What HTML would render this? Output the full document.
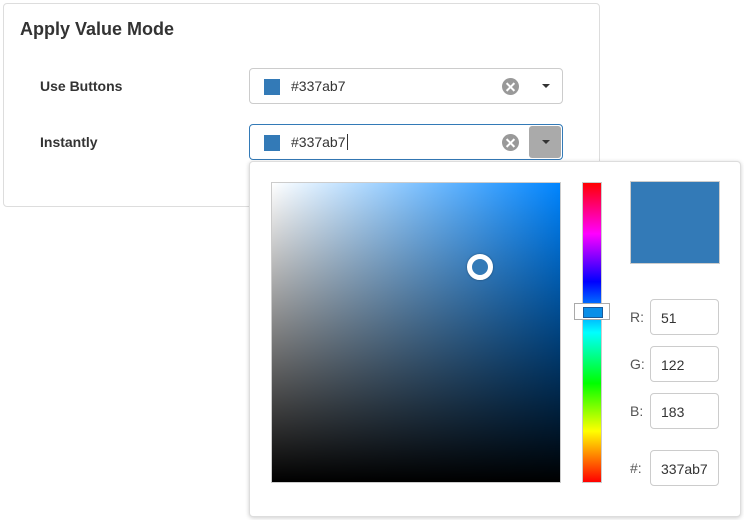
<!DOCTYPE html>
<html><head><meta charset="utf-8"><style>
*{box-sizing:border-box}
body{margin:0;width:744px;height:520px;background:#fff;font-family:"Liberation Sans",sans-serif;color:#333;position:relative;overflow:hidden}
.card{position:absolute;left:3px;top:3px;width:597px;height:204px;border:1px solid #ddd;border-radius:4px}
h1{position:absolute;left:20px;top:19px;margin:0;font-size:18px;font-weight:bold;color:#333}
.lbl{position:absolute;left:40px;font-size:14px;font-weight:bold;color:#333}
.box{position:absolute;left:249px;width:314px;height:36px;border:1px solid #ccc;border-radius:4px;background:#fff}
.box.f{border-color:#337ab7}
.sw{position:absolute;left:14px;top:10px;width:16px;height:16px;background:#337ab7}
.tx{position:absolute;left:41px;top:9px;font-size:14px;color:#333}
.clr{position:absolute;left:252px;top:9px;width:17px;height:17px;border-radius:50%;background:#999}
.clr:before,.clr:after{content:"";position:absolute;left:3px;top:7.5px;width:11px;height:2px;background:#fff;transform:rotate(45deg)}
.clr:after{transform:rotate(-45deg)}
.dd{position:absolute;right:1px;top:1px;width:32px;height:32px;border-radius:3px}
.dd:after{content:"";position:absolute;left:13px;top:14px;border-left:4px solid transparent;border-right:4px solid transparent;border-top:4px solid #333}
.pan{position:absolute;left:249px;top:161px;width:492px;height:356px;background:#fff;border:1px solid #ddd;border-radius:4px;box-shadow:0 1px 4px rgba(0,0,0,.2)}
.sq{position:absolute;left:271px;top:182px;width:290px;height:301px;border:1px solid #ccc;background:linear-gradient(to top,#000,rgba(0,0,0,0)),linear-gradient(to right,#fff,#0085ff)}
.mk{position:absolute;left:467px;top:254px;width:26px;height:26px;border-radius:50%;border:5px solid #fff;background:#337ab7;box-shadow:0 0 2px rgba(0,0,0,.4)}
.hue{position:absolute;left:582px;top:182px;width:20px;height:301px;border:1px solid #ccc;background:linear-gradient(to bottom,#f00 0%,#f0f 17%,#00f 33%,#0ff 50%,#0f0 67%,#ff0 83%,#f00 100%)}
.hs{position:absolute;left:574px;top:303px;width:36px;height:17px;border:1px solid #aaa;background:#fff}
.hs:after{content:"";position:absolute;left:8px;top:3px;width:18px;height:9px;background:#0a8fe8;border:1px solid #1a5a99}
.prev{position:absolute;left:630px;top:181px;width:90px;height:83px;border:1px solid #ccc;background:#337ab7}
.fl{position:absolute;left:630px;font-size:14px;color:#555}
.in{position:absolute;left:650px;width:69px;height:36px;border:1px solid #ccc;border-radius:4px;font-size:14px;color:#333;padding:10px 0 0 10px}
</style></head><body>
<div class="card"></div>
<h1>Apply Value Mode</h1>
<div class="lbl" style="top:78px">Use Buttons</div>
<div class="lbl" style="top:134px">Instantly</div>
<div class="box" style="top:68px"><div class="sw"></div><div class="tx">#337ab7</div><div class="clr"></div><div class="dd"></div></div>
<div class="box f" style="top:124px"><div class="sw"></div><div class="tx">#337ab7<span style="border-right:1px solid #333;margin-left:1px"></span></div><div class="clr"></div><div class="dd" style="background:#aaa"></div></div>
<div class="pan"></div>
<div class="sq"></div>
<div class="mk"></div>
<div class="hue"></div>
<div class="hs"></div>
<div class="prev"></div>
<div class="fl" style="top:309px">R:</div><div class="in" style="top:299px">51</div>
<div class="fl" style="top:356px">G:</div><div class="in" style="top:346px">122</div>
<div class="fl" style="top:403px">B:</div><div class="in" style="top:393px">183</div>
<div class="fl" style="top:460px">#:</div><div class="in" style="top:450px">337ab7</div>
</body></html>
